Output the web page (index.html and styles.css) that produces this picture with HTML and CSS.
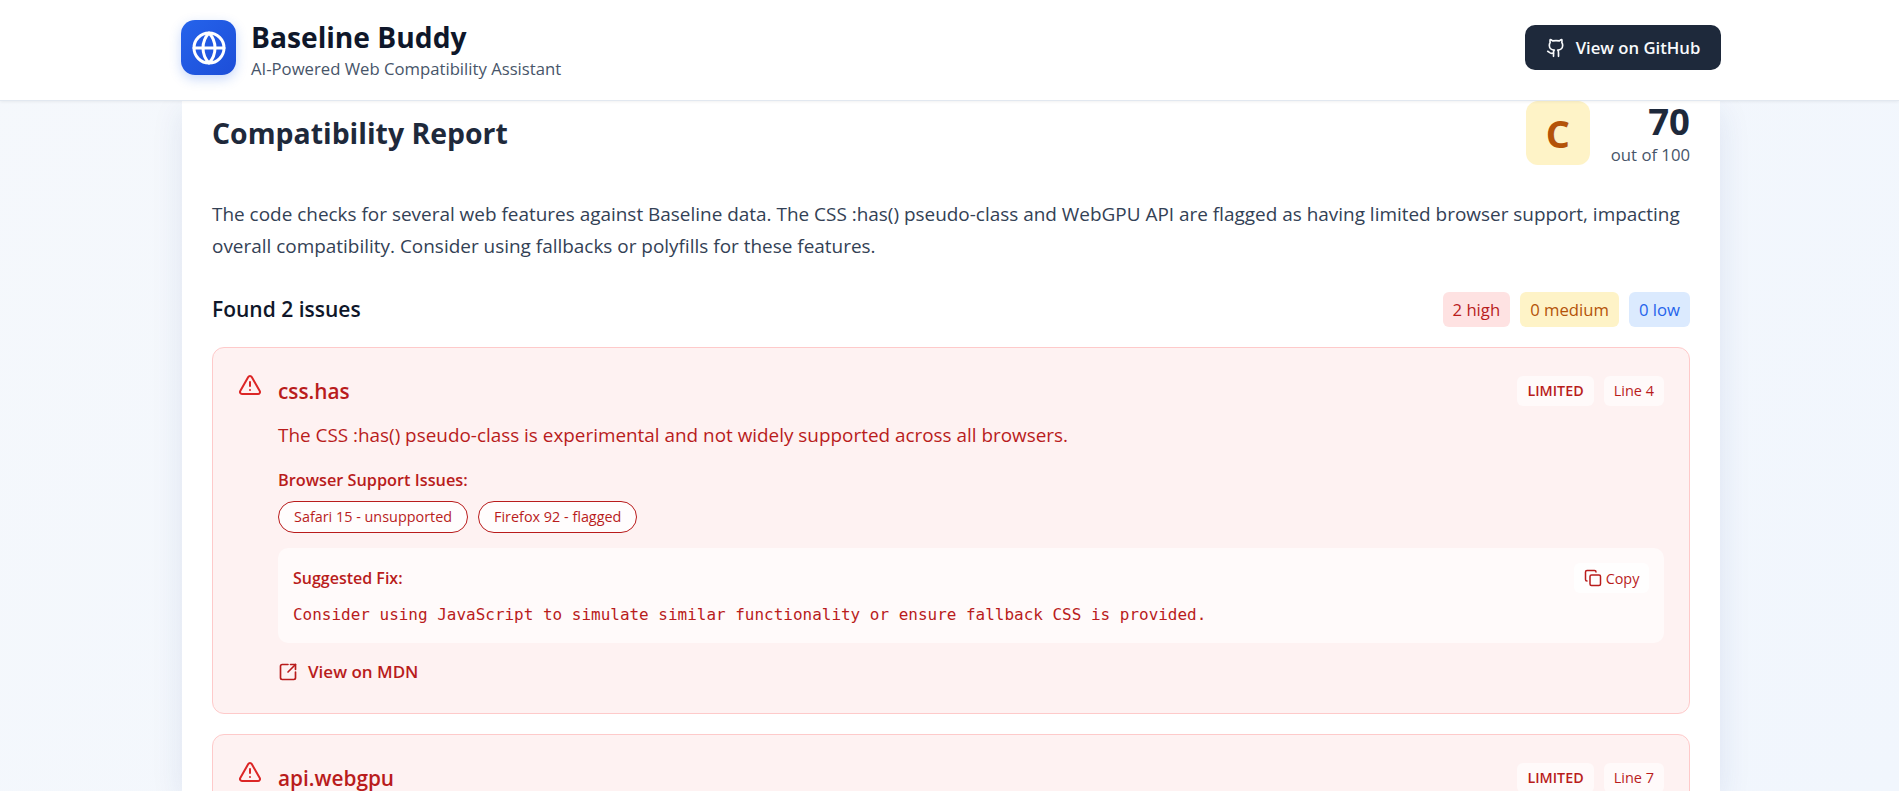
FILE: index.html
```html
<!DOCTYPE html>
<html lang="en">
<head>
<meta charset="utf-8">
<title>Baseline Buddy</title>
<link rel="stylesheet" href="styles.css">
</head>
<body>
<header class="topbar">
  <div class="topbar-inner">
    <div class="brand">
      <div class="logo">
        <svg width="36" height="36" viewBox="0 0 24 24" fill="none" stroke="#fff" stroke-width="2" stroke-linecap="round" stroke-linejoin="round"><circle cx="12" cy="12" r="10"/><path d="M12 2a14.5 14.5 0 0 0 0 20 14.5 14.5 0 0 0 0-20"/><path d="M2 12h20"/></svg>
      </div>
      <div class="brand-text">
        <h1 class="brand-title">Baseline Buddy</h1>
        <p class="brand-sub">AI-Powered Web Compatibility Assistant</p>
      </div>
    </div>
    <a class="github">
      <svg width="20" height="20" viewBox="0 0 24 24" fill="none" stroke="currentColor" stroke-width="2" stroke-linecap="round" stroke-linejoin="round"><path d="M15 22v-4a4.8 4.8 0 0 0-1-3.5c3 0 6-2 6-5.5.08-1.25-.27-2.48-1-3.5.28-1.15.28-2.35 0-3.5 0 0-1 0-3 1.5-2.64-.5-5.36-.5-8 0C6 2 5 2 5 2c-.3 1.15-.3 2.35 0 3.5A5.403 5.403 0 0 0 4 9c0 3.5 3 5.5 6 5.5-.39.49-.68 1.05-.85 1.65-.17.6-.22 1.23-.15 1.85v4"/><path d="M9 18c-4.51 2-5-2-7-2"/></svg>
      <span>View on GitHub</span>
    </a>
  </div>
</header>
<main class="page">
  <section class="report">
    <div class="report-head">
      <h2 class="report-title">Compatibility Report</h2>
      <div class="score">
        <div class="grade">C</div>
        <div class="score-text">
          <div class="score-num">70</div>
          <div class="score-of">out of 100</div>
        </div>
      </div>
    </div>
    <p class="summary">The code checks for several web features against Baseline data. The CSS :has() pseudo-class and WebGPU API are flagged as having limited browser support, impacting overall compatibility. Consider using fallbacks or polyfills for these features.</p>
    <div class="found">
      <h3 class="found-title">Found 2 issues</h3>
      <div class="counts">
        <span class="count count-high">2 high</span>
        <span class="count count-med">0 medium</span>
        <span class="count count-low">0 low</span>
      </div>
    </div>
    <article class="issue">
      <svg class="issue-icon" width="24" height="24" viewBox="0 0 24 24" fill="none" stroke="currentColor" stroke-width="2" stroke-linecap="round" stroke-linejoin="round"><path d="m21.73 18-8-14a2 2 0 0 0-3.48 0l-8 14A2 2 0 0 0 4 21h16a2 2 0 0 0 1.73-3"/><path d="M12 9v4"/><path d="M12 17h.01"/></svg>
      <div class="issue-body">
        <div class="issue-head">
          <h4 class="issue-name">css.has</h4>
          <div class="tags"><span class="tag tag-strong">LIMITED</span><span class="tag">Line 4</span></div>
        </div>
        <p class="issue-desc">The CSS :has() pseudo-class is experimental and not widely supported across all browsers.</p>
        <div class="support-title">Browser Support Issues:</div>
        <div class="pills"><span class="pill">Safari 15 - unsupported</span><span class="pill">Firefox 92 - flagged</span></div>
        <div class="fix">
          <div class="fix-head">
            <span class="fix-title">Suggested Fix:</span>
            <button class="copy">
              <svg width="18" height="18" viewBox="0 0 24 24" fill="none" stroke="currentColor" stroke-width="2" stroke-linecap="round" stroke-linejoin="round"><rect x="8" y="8" width="14" height="14" rx="2" ry="2"/><path d="M4 16c-1.1 0-2-.9-2-2V4c0-1.1.9-2 2-2h10c1.1 0 2 .9 2 2"/></svg>
              <span>Copy</span>
            </button>
          </div>
          <code class="fix-code">Consider using JavaScript to simulate similar functionality or ensure fallback CSS is provided.</code>
        </div>
        <a class="mdn">
          <svg width="20" height="20" viewBox="0 0 24 24" fill="none" stroke="currentColor" stroke-width="2" stroke-linecap="round" stroke-linejoin="round"><path d="M12 3H5a2 2 0 0 0-2 2v14a2 2 0 0 0 2 2h14a2 2 0 0 0 2-2v-7"/><path d="m21 3-9 9"/><path d="M15 3h6v6"/></svg>
          <span>View on MDN</span>
        </a>
      </div>
    </article>
    <article class="issue">
      <svg class="issue-icon" width="24" height="24" viewBox="0 0 24 24" fill="none" stroke="currentColor" stroke-width="2" stroke-linecap="round" stroke-linejoin="round"><path d="m21.73 18-8-14a2 2 0 0 0-3.48 0l-8 14A2 2 0 0 0 4 21h16a2 2 0 0 0 1.73-3"/><path d="M12 9v4"/><path d="M12 17h.01"/></svg>
      <div class="issue-body">
        <div class="issue-head">
          <h4 class="issue-name">api.webgpu</h4>
          <div class="tags"><span class="tag tag-strong">LIMITED</span><span class="tag">Line 7</span></div>
        </div>
      </div>
    </article>
  </section>
</main>
</body>
</html>
```
FILE: styles.css
```css
* { box-sizing: border-box; }
html, body { margin: 0; height: 791px; overflow: hidden; }
body {
  display: flex;
  flex-direction: column;
  font-family: "Open Sans", "Noto Sans", sans-serif;
  color: #1e293b;
  background: linear-gradient(135deg, #f5f8fc 0%, #f1f6fd 100%);
}
h1, h2, h3, h4, p { margin: 0; }
.topbar {
  flex: none;
  height: 101px;
  background: #fff;
  border-bottom: 1px solid #e2e8f0;
  box-shadow: 0 1px 3px rgba(0,0,0,.06);
  position: relative;
  z-index: 2;
}
.topbar-inner {
  width: 1540px;
  height: 100%;
  margin-left: 181px;
  padding-bottom: 5px;
  display: flex;
  align-items: center;
  justify-content: space-between;
}
.brand { display: flex; align-items: center; gap: 15px; }
.logo {
  width: 55px;
  height: 55px;
  border-radius: 14px;
  background: linear-gradient(135deg, #2563eb, #1d4ed8);
  box-shadow: 0 4px 12px rgba(37,99,235,.25);
  display: flex;
  align-items: center;
  justify-content: center;
}
.brand-text { padding-top: 3px; }
.brand-title { font-size: 28.2px; line-height: 36px; font-weight: 700; color: #0f172a; }
.brand-sub { margin-top: 3px; font-size: 16.7px; line-height: 22px; color: #475569; }
.github {
  width: 196px;
  height: 45px;
  border-radius: 10px;
  background: #1e293b;
  color: #f8fafc;
  display: flex;
  align-items: center;
  justify-content: center;
  gap: 10px;
  font-size: 16.7px;
  font-weight: 600;
}
.page { flex: 1; min-height: 0; }
.report {
  width: 1538px;
  margin-left: 182px;
  height: 100%;
  background: #fff;
  padding: 0 30px;
  box-shadow: 0 10px 30px rgba(30,58,138,.1);
}
.report-head { display: flex; justify-content: space-between; align-items: flex-start; height: 64px; }
.report-title { font-size: 28.4px; line-height: 38px; margin-top: 13px; font-weight: 700; }
.score { display: flex; gap: 21px; }
.grade {
  width: 64px;
  height: 64px;
  border-radius: 12px;
  background: #fef3c7;
  color: #b45309;
  font-size: 38px;
  font-weight: 700;
  display: flex;
  align-items: center;
  justify-content: center;
}
.score-text { text-align: right; }
.score-num { font-size: 36.5px; line-height: 40px; font-weight: 700; }
.score-of { margin-top: 3px; font-size: 16.7px; line-height: 22px; color: #475569; }
.summary { margin-top: 33px; font-size: 18.95px; line-height: 32px; color: #334155; }
.found { margin-top: 30px; display: flex; justify-content: space-between; align-items: center; height: 35px; }
.found-title { font-size: 21px; line-height: 35px; font-weight: 600; color: #0f172a; }
.counts { display: flex; gap: 10px; }
.count { height: 35px; padding: 0 10px; border-radius: 6px; font-size: 16.7px; line-height: 35px; }
.count-high { background: #fee2e2; color: #b91c1c; }
.count-med { background: #fef3c7; color: #b45309; }
.count-low { background: #dbeafe; color: #2563eb; }
.issue {
  margin-top: 20px;
  background: #fef2f2;
  border: 1px solid #fecaca;
  border-radius: 12px;
  padding: 25px;
  display: flex;
  gap: 16px;
  color: #b91c1c;
}
.issue-icon { flex: none; color: #dc2626; }
.issue-body { flex: 1; min-width: 0; }
.issue-head { margin-top: 3px; display: flex; justify-content: space-between; align-items: center; height: 30px; }
.issue-name { font-size: 20.8px; font-weight: 600; line-height: 30px; }
.tags { display: flex; gap: 10px; }
.tag { height: 30px; padding: 0 10px; border-radius: 6px; background: rgba(255,255,255,.6); font-size: 14.5px; line-height: 30px; }
.tag-strong { font-size: 14.3px; font-weight: 600; }
.issue-desc { margin-top: 14px; font-size: 18.9px; line-height: 30px; }
.support-title { margin-top: 18px; font-size: 16.3px; line-height: 24px; font-weight: 600; }
.pills { margin-top: 9px; display: flex; gap: 10px; }
.pill { height: 32px; padding: 0 15px; border: 1px solid #b91c1c; border-radius: 16px; background: rgba(255,255,255,.8); font-size: 14.4px; line-height: 30px; }
.fix { margin-top: 15px; padding: 15px; border-radius: 10px; background: rgba(255,255,255,.6); }
.fix-head { display: flex; justify-content: space-between; align-items: center; height: 30px; }
.fix-title { font-size: 16px; font-weight: 600; }
.copy {
  height: 30px;
  width: 75px;
  padding: 0;
  border: 0;
  border-radius: 6px;
  background: rgba(255,255,255,.8);
  color: #b91c1c;
  font: inherit;
  font-size: 14.4px;
  display: flex;
  align-items: center;
  justify-content: center;
  gap: 4px;
}
.fix-code { display: block; margin-top: 9px; font-family: "DejaVu Sans Mono", monospace; font-size: 15.97px; line-height: 26px; }
.mdn { margin-top: 15px; margin-bottom: 2px; display: flex; align-items: center; gap: 10px; font-size: 17px; line-height: 28px; font-weight: 600; }
```
